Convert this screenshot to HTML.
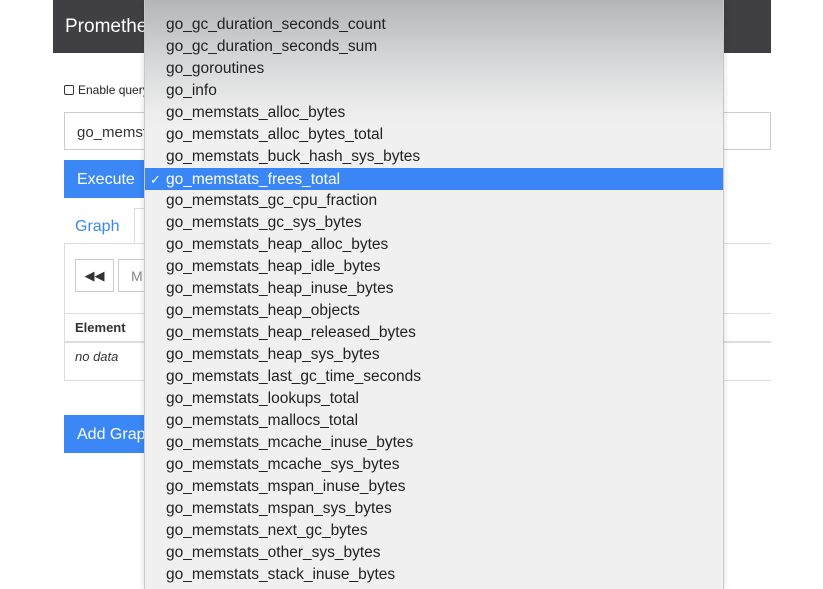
<!DOCTYPE html>
<html><head><style>
*{margin:0;padding:0;box-sizing:border-box}
body{width:823px;height:589px;overflow:hidden;background:#fff;font-family:"Liberation Sans",sans-serif;position:relative}
.nav{position:absolute;left:53px;top:0;width:718px;height:53px;background:#3f3f44;color:#fff;font-size:19px;padding:16px 0 0 12px}
.abs{position:absolute;white-space:nowrap}
.btn{background:#3a87f5;color:#fff;font-size:16px;overflow:hidden}
.dd{position:absolute;left:144px;top:0;width:580px;height:589px;background:linear-gradient(#b3b5b8 0px,#d6d7d9 60px,#ececec 110px,#f0f0f0 130px);border-left:1px solid #c8c8c8;border-right:1px solid #c8c8c8;box-shadow:0 0 6px rgba(0,0,0,.15)}
.it{position:absolute;left:0;width:578px;height:22px;line-height:22px;padding-left:21px;font-size:15.5px;color:#222;white-space:nowrap}
.sel{background:#3a86f6;color:#fff}
.sel:before{content:"✓";position:absolute;left:5px;font-size:13px}
</style></head><body>
<div class="nav">Prometheus</div>
<div class="abs" style="left:64px;top:83px;font-size:12px;color:#222"><span style="display:inline-block;width:10px;height:10px;border:1.5px solid #333;border-radius:2px;vertical-align:-1px;margin-right:4px"></span>Enable query history</div>
<div class="abs" style="left:64px;top:112px;width:707px;height:38px;border:1px solid #ccc;font-size:15px;padding:11px 12px;color:#333">go_memstats_frees_total</div>
<div class="abs btn" style="left:64px;top:160px;width:90px;height:38px;padding:11px 13px">Execute</div>
<div class="abs" style="left:64px;top:208px;width:70px;height:36px;color:#3a87f5;font-size:16px;padding:10px 11px">Graph</div>
<div class="abs" style="left:134px;top:208px;width:20px;height:36px;border:1px solid #ddd;border-bottom:none"></div>
<div class="abs" style="left:64px;top:243px;width:90px;height:138px;border:1px solid #ddd;border-top:none"></div>
<div class="abs" style="left:64px;top:243px;width:707px;height:1px;background:#ddd"></div>
<div class="abs" style="left:75px;top:259px;width:39px;height:33px;border:1px solid #ccc;text-align:center;line-height:31px;font-size:13px;color:#333">◀◀</div>
<div class="abs" style="left:118px;top:259px;width:40px;height:33px;border:1px solid #ccc;color:#888;padding:8px 12px;font-size:14px">M</div>
<div class="abs" style="left:64px;top:313px;width:707px;height:1px;background:#ddd"></div>
<div class="abs" style="left:75px;top:320px;font-size:13px;font-weight:bold;color:#333">Element</div>
<div class="abs" style="left:64px;top:341px;width:707px;height:2px;background:#ddd"></div>
<div class="abs" style="left:75px;top:349px;font-size:13px;font-style:italic;color:#333">no data</div>
<div class="abs" style="left:64px;top:380px;width:707px;height:1px;background:#ddd"></div>
<div class="abs btn" style="left:64px;top:415px;width:100px;height:38px;padding:11px 13px">Add Graph</div>
<div class="dd">
<div class="it" style="top:14px">go_gc_duration_seconds_count</div>
<div class="it" style="top:36px">go_gc_duration_seconds_sum</div>
<div class="it" style="top:58px">go_goroutines</div>
<div class="it" style="top:80px">go_info</div>
<div class="it" style="top:102px">go_memstats_alloc_bytes</div>
<div class="it" style="top:124px">go_memstats_alloc_bytes_total</div>
<div class="it" style="top:146px">go_memstats_buck_hash_sys_bytes</div>
<div class="it sel" style="top:168px;height:22px;line-height:23px">go_memstats_frees_total</div>
<div class="it" style="top:190px">go_memstats_gc_cpu_fraction</div>
<div class="it" style="top:212px">go_memstats_gc_sys_bytes</div>
<div class="it" style="top:234px">go_memstats_heap_alloc_bytes</div>
<div class="it" style="top:256px">go_memstats_heap_idle_bytes</div>
<div class="it" style="top:278px">go_memstats_heap_inuse_bytes</div>
<div class="it" style="top:300px">go_memstats_heap_objects</div>
<div class="it" style="top:322px">go_memstats_heap_released_bytes</div>
<div class="it" style="top:344px">go_memstats_heap_sys_bytes</div>
<div class="it" style="top:366px">go_memstats_last_gc_time_seconds</div>
<div class="it" style="top:388px">go_memstats_lookups_total</div>
<div class="it" style="top:410px">go_memstats_mallocs_total</div>
<div class="it" style="top:432px">go_memstats_mcache_inuse_bytes</div>
<div class="it" style="top:454px">go_memstats_mcache_sys_bytes</div>
<div class="it" style="top:476px">go_memstats_mspan_inuse_bytes</div>
<div class="it" style="top:498px">go_memstats_mspan_sys_bytes</div>
<div class="it" style="top:520px">go_memstats_next_gc_bytes</div>
<div class="it" style="top:542px">go_memstats_other_sys_bytes</div>
<div class="it" style="top:564px">go_memstats_stack_inuse_bytes</div>
</div>
</body></html>
